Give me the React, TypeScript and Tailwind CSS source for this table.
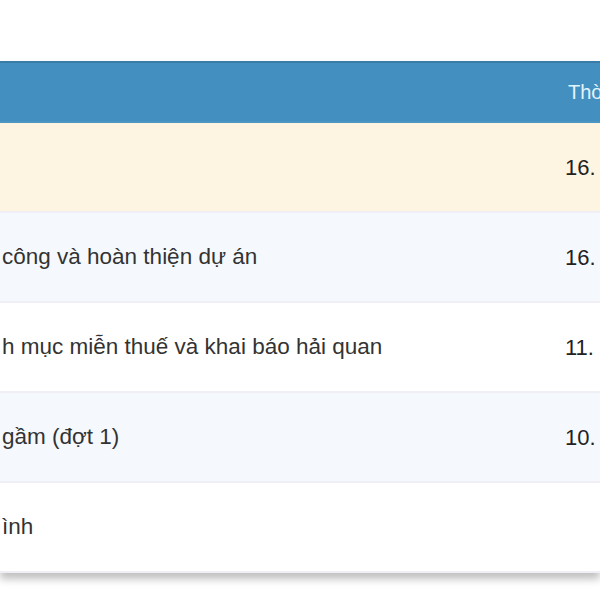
import React from 'react'

const rows = [
  { text: '', date: '16.', bg: 'bg-[#fdf5e2]' },
  { text: 'công và hoàn thiện dự án', date: '16.', bg: 'bg-[#f5f9fd]' },
  { text: 'h mục miễn thuế và khai báo hải quan', date: '11.', bg: 'bg-white' },
  { text: 'gầm (đợt 1)', date: '10.', bg: 'bg-[#f5f9fd]' },
  { text: 'ình', date: '', bg: 'bg-white' },
]

export default function App() {
  return (
    <div
      className="w-[600px] h-[600px] overflow-hidden bg-white pt-[61px]"
      style={{ fontFamily: '"Liberation Sans", Arial, sans-serif' }}
    >
      <div className="shadow-[0_6px_8px_rgba(0,0,0,0.25)]">
        {/* Header */}
        <div className="grid grid-cols-[1fr_35px] h-[62px] items-center bg-[#4390c0] border-t-2 border-[#3a7ca8] border-b-2 border-b-[#4a95c2]">
          <div />
          <div className="pl-[3px] text-[20px] text-[#e2f4fc] whitespace-nowrap">Thời gian</div>
        </div>

        {/* Body */}
        {rows.map((row, i) => (
          <div
            key={i}
            className={`grid grid-cols-[1fr_35px] h-[90px] items-center border-b-2 border-[#f0eff6] ${row.bg}`}
          >
            <div className="pl-[2px] text-[22.5px] text-[#333] whitespace-nowrap">{row.text}</div>
            <div className="text-[22px] text-[#222] whitespace-nowrap">{row.date}</div>
          </div>
        ))}
      </div>
    </div>
  )
}
